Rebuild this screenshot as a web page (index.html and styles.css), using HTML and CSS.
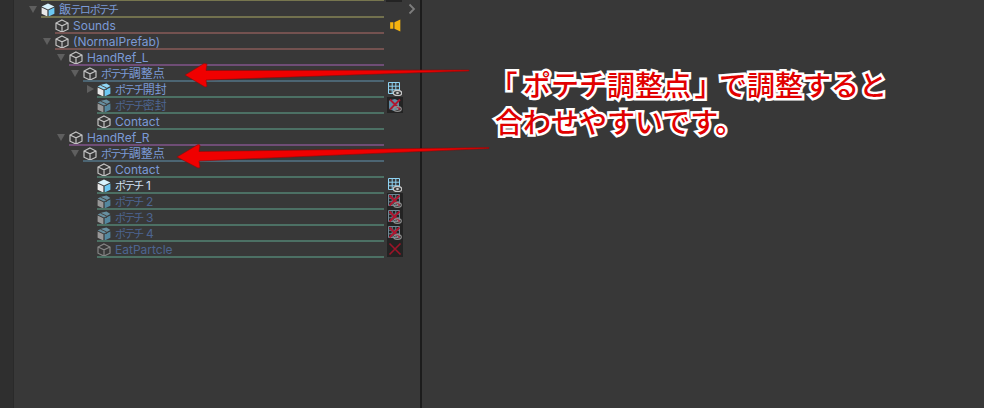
FILE: index.html
```html
<!DOCTYPE html>
<html lang="ja">
<head>
	<meta charset="UTF-8">
	<title>hierarchy</title>
	<link rel="stylesheet" href="styles.css">
</head>
<body>
	<svg class="defs" width="0" height="0">
		<symbol id="cube" viewBox="0 0 14 14">
			<path d="M7 1L13 4V10.2L7 13L1 10.2V4ZM1 4L7 6.8L13 4M7 6.8V13" fill="none" stroke="currentColor" stroke-width="1.2"/>
		</symbol>
		<symbol id="cube-solid" viewBox="0 0 14 14">
			<path d="M7 .6L13.400 3.600L7 6.600L.6 3.600Z" fill="#d7f2fc"/>
			<path d="M.6 4.500L6.400 7.300V13.600L.6 10.800Z" fill="#e8e8e8"/>
			<path d="M13.400 4.500L7.600 7.300V13.600L13.400 10.800Z" fill="#6cc8f2"/>
		</symbol>
		<symbol id="cube-variant" viewBox="0 0 14 14">
			<path d="M5 1.600L9.500 .6L13.400 3L7 6.600L.6 3.600Z" fill="#8fd6f5"/>
			<path d="M.6 4.500L6.400 7.300V13.600L.6 10.800Z" fill="#e8e8e8"/>
			<path d="M13.400 4.500L7.600 7.300V13.600L13.400 10.800Z" fill="#6cc8f2"/>
			<path d="M3.500 2.200L9.500 4.900V7" fill="none" stroke="#555" stroke-width="1"/>
		</symbol>
		<symbol id="mesh" viewBox="0 0 14 14">
			<path d="M.5 .5H11.500V11.500H.5ZM4.200 .5V11.500M7.800 .5V11.500M.5 4.200H11.500M.5 7.800H11.500" fill="none" stroke="#8fd3f2" stroke-width="1"/>
			<ellipse cx="9.500" cy="11" rx="4.200" ry="2.600" fill="#3a3a3a" stroke="#c8c8c8" stroke-width="1.200"/>
			<circle cx="9.500" cy="11" r="1.300" fill="#c8c8c8"/>
		</symbol>
		<symbol id="mesh-off" viewBox="0 0 14 14">
			<path d="M.5 .5H11.500V11.500H.5ZM4.200 .5V11.500M7.800 .5V11.500M.5 4.200H11.500M.5 7.800H11.500" fill="none" stroke="#6f8794" stroke-width="1"/>
			<path d="M1.500 1.500L11.500 11.500M11.500 1.500L1.500 11.500" stroke="#b0152f" stroke-width="1.800"/>
			<ellipse cx="9.500" cy="11" rx="3.800" ry="2.300" fill="none" stroke="#8f8f8f" stroke-width="1.200"/>
			<circle cx="9.500" cy="11" r="1.100" fill="#8f8f8f"/>
		</symbol>
		<symbol id="box-off" viewBox="0 0 14 14">
			<path d="M1 2.500L7 1L11 3V11L6 13L1 11Z" fill="#5f8aa3"/>
			<path d="M2 1.500L12 11.500M12 1.500L2 11.500" stroke="#b0152f" stroke-width="1.800"/>
			<ellipse cx="9.500" cy="11" rx="3.800" ry="2.300" fill="none" stroke="#8f8f8f" stroke-width="1.200"/>
			<circle cx="9.500" cy="11" r="1.100" fill="#8f8f8f"/>
		</symbol>
		<symbol id="cross" viewBox="0 0 14 14">
			<path d="M1.500 1.500L12.500 12.500M12.500 1.500L1.500 12.500" stroke="#9c1428" stroke-width="1.600"/>
		</symbol>
	</svg>

	<div class="window">
		<aside class="gutter"></aside>

		<section class="hierarchy">
			<span class="top-line"></span>
			<span class="top-tag"></span>
			<span class="more">
				<svg width="8" height="12" viewBox="0 0 8 12"><path d="M1.500 1.500L6 6L1.500 10.500" fill="none" stroke="#7d7d7d" stroke-width="1.800"/></svg>
			</span>
			<ul class="tree">
				<li class="row d1 line-olive">
					<i class="fold"></i>
					<svg class="ico"><use href="#cube-solid"/></svg>
					<span class="name">飯<span class="kana">テロポテチ</span></span>
				</li>
				<li class="row d2 line-rust">
					<svg class="ico"><use href="#cube"/></svg>
					<span class="name">Sounds</span>
					<span class="tag">
						<svg width="13" height="15" viewBox="0 0 12 14"><path d="M1 4H4V10H1ZM5 4L10.500 1.500V12.500L5 10Z" fill="#f5b40f"/></svg>
					</span>
				</li>
				<li class="row d2 line-rust">
					<i class="fold"></i>
					<svg class="ico"><use href="#cube"/></svg>
					<span class="name">(NormalPrefab)</span>
				</li>
				<li class="row d3 line-plum">
					<i class="fold"></i>
					<svg class="ico"><use href="#cube"/></svg>
					<span class="name">HandRef_L</span>
				</li>
				<li class="row d4 line-slate">
					<i class="fold"></i>
					<svg class="ico"><use href="#cube"/></svg>
					<span class="name"><span class="kana">ポテチ</span>調整点</span>
				</li>
				<li class="row d5 line-green">
					<i class="fold shut"></i>
					<svg class="ico"><use href="#cube-variant"/></svg>
					<span class="name"><span class="kana">ポテチ</span>開封</span>
					<span class="tag"><svg class="tag-ico"><use href="#mesh"/></svg></span>
				</li>
				<li class="row d5 line-green off">
					<svg class="ico"><use href="#cube-variant"/></svg>
					<span class="name"><span class="kana">ポテチ</span>密封</span>
					<span class="tag dark"><svg class="tag-ico"><use href="#box-off"/></svg></span>
				</li>
				<li class="row d5 line-green">
					<svg class="ico"><use href="#cube"/></svg>
					<span class="name">Contact</span>
				</li>
				<li class="row d3 line-plum">
					<i class="fold"></i>
					<svg class="ico"><use href="#cube"/></svg>
					<span class="name">HandRef_R</span>
				</li>
				<li class="row d4 line-slate">
					<i class="fold"></i>
					<svg class="ico"><use href="#cube"/></svg>
					<span class="name"><span class="kana">ポテチ</span>調整点</span>
				</li>
				<li class="row d5 line-green">
					<svg class="ico"><use href="#cube"/></svg>
					<span class="name">Contact</span>
				</li>
				<li class="row d5 line-green">
					<svg class="ico"><use href="#cube-solid"/></svg>
					<span class="name bright"><span class="kana">ポテチ</span> 1</span>
					<span class="tag"><svg class="tag-ico"><use href="#mesh"/></svg></span>
				</li>
				<li class="row d5 line-green off">
					<svg class="ico"><use href="#cube-variant"/></svg>
					<span class="name"><span class="kana">ポテチ</span> 2</span>
					<span class="tag dark"><svg class="tag-ico"><use href="#mesh-off"/></svg></span>
				</li>
				<li class="row d5 line-green off">
					<svg class="ico"><use href="#cube-variant"/></svg>
					<span class="name"><span class="kana">ポテチ</span> 3</span>
					<span class="tag dark"><svg class="tag-ico"><use href="#mesh-off"/></svg></span>
				</li>
				<li class="row d5 line-green off">
					<svg class="ico"><use href="#cube-variant"/></svg>
					<span class="name"><span class="kana">ポテチ</span> 4</span>
					<span class="tag dark"><svg class="tag-ico"><use href="#mesh-off"/></svg></span>
				</li>
				<li class="row d5 line-green off">
					<svg class="ico"><use href="#cube"/></svg>
					<span class="name">EatPartcle</span>
					<span class="tag dark"><svg class="tag-ico"><use href="#cross"/></svg></span>
				</li>
			</ul>
		</section>

		<section class="inspector">
			<p class="note"><span class="open">「</span>ポテチ調整点<span class="close">」</span>で調整すると<br>合わせやすいです。</p>
		</section>
	</div>

	<!-- red arrows drawn on top of the screenshot -->
	<svg class="arrows" width="984" height="408" viewBox="0 0 984 408">
		<g fill="#f00000" stroke="#8c0a0a" stroke-width=".6" stroke-linejoin="round">
			<path d="M469 70L206 70.500L207 64L204 63.500L185 75L205 87L207 86.500L206 80L469 71Z"/>
			<path d="M489 147.500L199 151.500L200 145L198 144.500L177 157L198 168L200 167.500L199 161L489 148.500Z"/>
		</g>
	</svg>
</body>
</html>
```

FILE: styles.css
```css
*{margin: 0; padding: 0; box-sizing: border-box;}
li{list-style: none;}
html,body{width: 984px; height: 408px; overflow: hidden; background: #383838;}
body{font-family: Inter, "Noto Sans CJK JP", sans-serif; font-size: 12px;}
.defs{position: absolute;}

.window{display: flex; height: 408px;}
.gutter{width: 14px; background: #2f2f2f; border-right: 1px solid #2a2a2a;}

.hierarchy{width: 408px; position: relative; background: #383838; border-right: 2px solid #1c1c1c;}
.top-line{display: block; width: 343px; height: 1px; margin-left: 27px; background: #77764f;}
.top-tag{position: absolute; left: 372px; top: 0; width: 16px; height: 2px; background: #232323;}
.more{position: absolute; left: 394px; top: 3px; display: flex;}
.tree{width: 370px;}

.row{height: 16px; padding-top: 2px; display: flex; align-items: center; position: relative; color: #7b9ad6; white-space: nowrap;}
.row::after{content: ""; position: absolute; right: 0; bottom: -1px; height: 2px; left: 0;}
.d1{padding-left: 14px;}
.d2{padding-left: 28px;}
.d3{padding-left: 42px;}
.d4{padding-left: 56px;}
.d5{padding-left: 70px;}
.d1::after{left: 27px;}
.d2::after{left: 41px;}
.d3::after{left: 55px;}
.d4::after{left: 69px;}
.d5::after{left: 83px;}
.line-olive::after{background: #72714e;}
.line-rust::after{background: #745250;}
.line-plum::after{background: #6f4d76;}
.line-slate::after{background: #4c6573;}
.line-green::after{background: #4c7064;}

.fold{width: 13px; height: 14px; flex: none; position: relative;}
.fold::before{content: ""; position: absolute; left: 1px; top: 3px; border: 4.500px solid transparent; border-top: 7px solid #5f5f5f; border-bottom: 0;}
.fold.shut::before{left: 3px; top: 2px; border: 4.500px solid transparent; border-left: 7px solid #5f5f5f; border-right: 0;}
.row > .ico:first-child{margin-left: 13px;}
.ico{width: 14px; height: 14px; flex: none; color: #c4c4c4;}
.name{margin-left: 4px; line-height: 14px; font-feature-settings: "palt";}
.kana{font-size: 11px; letter-spacing: -1px;}
.name.bright{color: #cfe0f5;}
.off .ico{opacity: .55;}
.off .name{color: #4d6590;}

.tag{position: absolute; left: 373px; top: 0; width: 16px; height: 16px; display: flex; align-items: center; justify-content: center;}
.tag.dark{background: #232323;}
.tag-ico{width: 14px; height: 14px;}

.inspector{flex: 1; padding: 66px 0 0 73px;}
.note{font-family: "Noto Sans CJK JP", sans-serif; font-weight: 500; font-size: 28px; line-height: 37px; color: #e10000; white-space: nowrap; paint-order: stroke fill; -webkit-text-stroke: 5px #fff;}
.open,.close{font-feature-settings: "palt";}
.open{margin: 0 6px 0 8px;}
.close{margin: 0 10px 0 4px;}

.arrows{position: absolute; left: 0; top: 0;}
```
